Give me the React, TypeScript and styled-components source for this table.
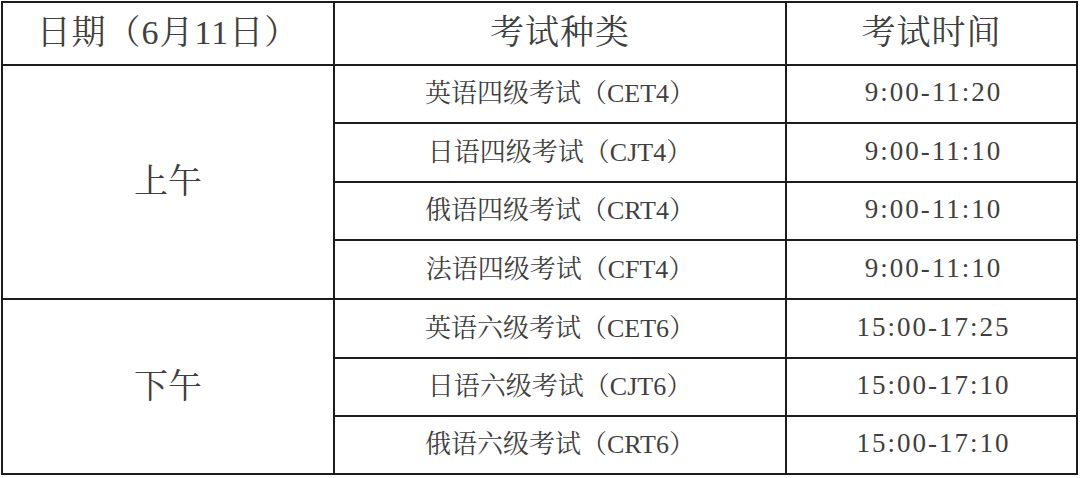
import React from "react";
import { styled, createGlobalStyle } from "styled-components";

const GlobalStyle = createGlobalStyle`
  html, body {
    margin: 0;
    padding: 0;
    background: #fff;
  }
  body {
    font-family: "Liberation Serif", "Noto Serif CJK SC", "Noto Sans CJK SC", serif;
  }
`;

const ScheduleGrid = styled.div`
  display: grid;
  grid-template-columns: 330px 450px 289px;
  grid-template-rows: 61px 56px 57px 56px 57px 57px 56px 56px;
  gap: 2px;
  padding: 2px;
  margin: 1px 0 0 1px;
  width: fit-content;
  background: #1c1c1c;
`;

const Cell = styled.div<{ $span?: number; $size?: number }>`
  display: flex;
  align-items: center;
  justify-content: center;
  padding-bottom: 7px;
  background: #fff;
  color: #3f3f3f;
  font-size: ${(p) => p.$size ?? 26}px;
  white-space: nowrap;
  grid-row: ${(p) => (p.$span ? `span ${p.$span}` : "auto")};
`;

const HeadCell = styled(Cell)`
  font-size: 34px;
  letter-spacing: 1px;
  padding-bottom: 8px;
`;

const TimeCell = styled(Cell)`
  font-size: 27px;
  letter-spacing: 2px;
  padding: 0 0 3px 4px;
`;

type Exam = { name: string; time: string };

const sessions: { label: string; exams: Exam[] }[] = [
  {
    label: "上午",
    exams: [
      { name: "英语四级考试（CET4）", time: "9:00-11:20" },
      { name: "日语四级考试（CJT4）", time: "9:00-11:10" },
      { name: "俄语四级考试（CRT4）", time: "9:00-11:10" },
      { name: "法语四级考试（CFT4）", time: "9:00-11:10" },
    ],
  },
  {
    label: "下午",
    exams: [
      { name: "英语六级考试（CET6）", time: "15:00-17:25" },
      { name: "日语六级考试（CJT6）", time: "15:00-17:10" },
      { name: "俄语六级考试（CRT6）", time: "15:00-17:10" },
    ],
  },
];

const App = () => {
  return (
    <>
      <GlobalStyle />
      <ScheduleGrid>
        <HeadCell>日期（6月11日）</HeadCell>
        <HeadCell>考试种类</HeadCell>
        <HeadCell>考试时间</HeadCell>
        {sessions.map((s) => (
          <React.Fragment key={s.label}>
            <Cell $span={s.exams.length} $size={34}>
              {s.label}
            </Cell>
            {s.exams.map((e) => (
              <React.Fragment key={e.name}>
                <Cell style={{ gridColumn: 2 }}>{e.name}</Cell>
                <TimeCell>{e.time}</TimeCell>
              </React.Fragment>
            ))}
          </React.Fragment>
        ))}
      </ScheduleGrid>
    </>
  );
};

export default App;
